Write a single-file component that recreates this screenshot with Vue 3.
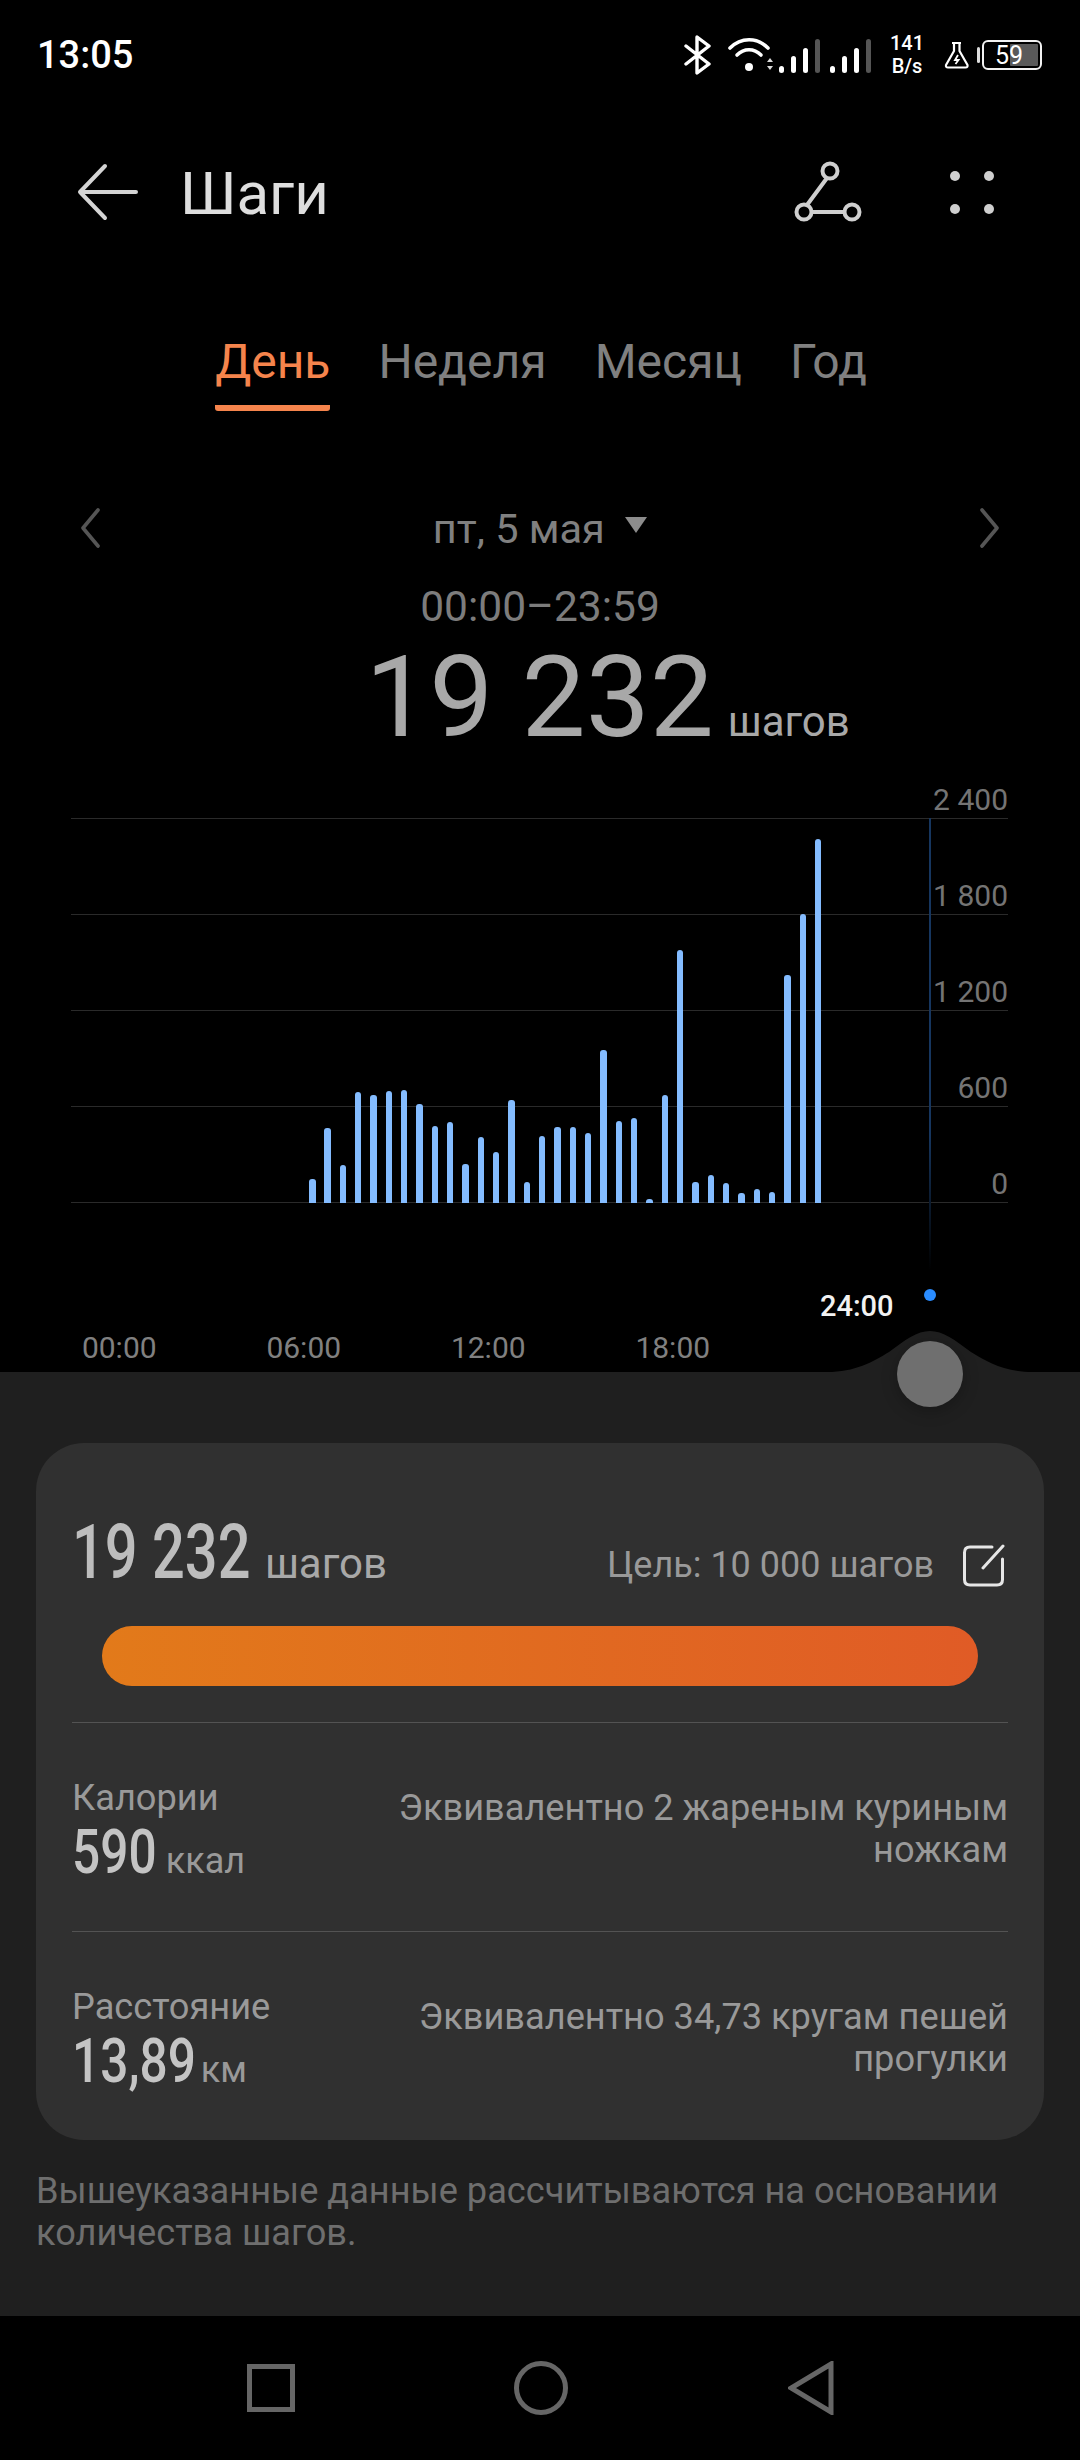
<template>
  <div class="page">
    <section class="top">
      <header class="status">
        <span class="clock">13:05</span>
        <div class="status-icons">
          <svg class="ic-bt" width="30" height="40" viewBox="0 0 30 40">
            <path d="M3 11 L26 29 L14 38 V2 L26 11 L3 29" fill="none" stroke="#fff" stroke-width="3.4" stroke-linejoin="round" stroke-linecap="round" />
          </svg>
          <svg class="ic-wifi" width="46" height="36" viewBox="0 0 46 36">
            <path d="M2 11 C13 0 29 0 40 11" fill="none" stroke="#fff" stroke-width="3.6" stroke-linecap="round" />
            <path d="M9 18 C16 11 26 11 33 18" fill="none" stroke="#fff" stroke-width="3.6" stroke-linecap="round" />
            <circle cx="21" cy="30" r="4" fill="#fff" />
            <path d="M39 25 L42 21 L45 25 Z M39 29 L45 29 L42 33 Z" fill="#ddd" />
          </svg>
          <div v-for="n in 2" :key="n" class="signal">
            <span v-for="(h, i) in signalBars" :key="i" class="sig-bar" :class="{ off: i === 3 }" :style="{ height: h + 'px' }"></span>
          </div>
          <div class="speed"><span>141</span><span>B/s</span></div>
          <svg class="ic-flask" width="26" height="28" viewBox="0 0 26 28">
            <path d="M8 2 H17 M10 2 V10 L2 24 Q1.5 26.5 4 26.5 H21.5 Q24 26.5 23.5 24 L15.5 10 V2" fill="none" stroke="#fff" stroke-width="2.2" stroke-linejoin="round" />
            <path d="M14 14 L11 19 H14.5 L11.5 23" fill="none" stroke="#fff" stroke-width="1.8" />
          </svg>
          <span class="bat-nub"></span>
          <div class="battery">
            <span class="bat-fill"></span>
            <span class="bat-num">59</span>
          </div>
        </div>
      </header>

      <div class="appbar">
        <svg width="64" height="58" viewBox="0 0 64 58" class="back">
          <path d="M29 3 L4 29 L29 55 M4 29 H60" fill="none" stroke="#d4d4d4" stroke-width="4" stroke-linecap="round" stroke-linejoin="round" />
        </svg>
        <h1>Шаги</h1>
        <svg width="68" height="62" viewBox="0 0 68 62" class="share">
          <circle cx="36" cy="10" r="7.5" fill="none" stroke="#cfcfcf" stroke-width="4" />
          <circle cx="10" cy="51" r="7.5" fill="none" stroke="#cfcfcf" stroke-width="4" />
          <circle cx="58" cy="51" r="7.5" fill="none" stroke="#cfcfcf" stroke-width="4" />
          <path d="M33 17 L13 44 M18 51 H50" fill="none" stroke="#cfcfcf" stroke-width="4" />
        </svg>
        <div class="dots"><i></i><i></i><i></i><i></i></div>
      </div>

      <nav class="tabs">
        <span v-for="(t, i) in tabs" :key="t" class="tab" :class="{ active: i === 0 }">{{ t }}</span>
      </nav>

      <div class="date-row">
        <svg width="24" height="40" viewBox="0 0 24 40"><path d="M20 2 L5 20 L20 38" fill="none" stroke="#555" stroke-width="3.6" stroke-linecap="round" stroke-linejoin="round" /></svg>
        <div class="date">пт, 5 мая <span class="caret"></span></div>
        <svg width="24" height="40" viewBox="0 0 24 40"><path d="M4 2 L19 20 L4 38" fill="none" stroke="#555" stroke-width="3.6" stroke-linecap="round" stroke-linejoin="round" /></svg>
      </div>

      <div class="range">00:00–23:59</div>
      <div class="total"><span class="total-num">19 232</span><span class="total-unit">шагов</span></div>

      <div class="chart">
        <div v-for="l in yLabels" :key="l" class="grid-row"><span>{{ l }}</span></div>
        <div class="bars">
          <span v-for="(h, i) in bars" :key="i" class="bar" :style="{ height: h + 'px' }"></span>
        </div>
        <div class="x-labels">
          <span v-for="x in xLabels" :key="x">{{ x }}</span>
        </div>
        <div class="cursor-line"></div>
        <div class="cursor-dot"></div>
        <div class="cursor-time">24:00</div>
      </div>
    </section>

    <section class="panel">
      <svg class="hump" width="206" height="42" viewBox="0 0 206 42">
        <path d="M0 42 V41 C28 41 46 31 62 21 C78 9 90 0 103 0 C116 0 128 9 144 21 C160 31 178 41 206 41 V42 Z" fill="#1f1f1f" />
      </svg>
      <div class="knob"></div>

      <div class="card">
        <div class="goal-row">
          <div class="value-big"><b>19 232</b><span>шагов</span></div>
          <div class="goal">
            <span>Цель: 10 000 шагов</span>
            <svg width="44" height="44" viewBox="0 0 44 44">
              <path d="M31 4 H9 Q3.5 4 3.5 9.5 V36.5 Q3.5 42 9 42 H36 Q41.5 42 41.5 36.5 V16" fill="none" stroke="#e6e6e6" stroke-width="3" stroke-linecap="round" />
              <path d="M42 3 L22 25" fill="none" stroke="#e6e6e6" stroke-width="3" stroke-linecap="round" />
            </svg>
          </div>
        </div>
        <div class="progress"></div>

        <div v-for="row in stats" :key="row.label" class="stat">
          <div class="stat-left">
            <div class="stat-label">{{ row.label }}</div>
            <div class="stat-value"><b>{{ row.value }}</b><span>{{ row.unit }}</span></div>
          </div>
          <p class="stat-note">{{ row.note }}</p>
        </div>
      </div>

      <p class="footnote">Вышеуказанные данные рассчитываются на основании количества шагов.</p>
    </section>

    <footer class="navbar">
      <svg width="48" height="48" viewBox="0 0 48 48"><rect x="2.5" y="2.5" width="43" height="43" fill="none" stroke="#666" stroke-width="5" /></svg>
      <svg width="54" height="54" viewBox="0 0 54 54"><circle cx="27" cy="27" r="24.5" fill="none" stroke="#666" stroke-width="5" /></svg>
      <svg width="46" height="54" viewBox="0 0 46 54"><path d="M43 3 V51 L3 27 Z" fill="none" stroke="#666" stroke-width="5" stroke-linejoin="miter" /></svg>
    </footer>
  </div>
</template>

<script setup>
const tabs = ['День', 'Неделя', 'Месяц', 'Год']
const signalBars = [7, 17, 25, 34]
const yLabels = ['2 400', '1 800', '1 200', '600', '0']
const xLabels = ['00:00', '06:00', '12:00', '18:00']
const bars = [24, 75, 38, 111, 108, 112, 113, 99, 77, 81, 39, 66, 51, 103, 21, 67, 76, 76, 70, 153, 82, 85, 4, 108, 253, 21, 28, 20, 10, 14, 11, 228, 289, 364]
const stats = [
  { label: 'Калории', value: '590', unit: 'ккал', note: 'Эквивалентно 2 жареным куриным ножкам' },
  { label: 'Расстояние', value: '13,89', unit: 'км', note: 'Эквивалентно 34,73 кругам пешей прогулки' },
]
</script>

<style>
body {
  background: #000;
}
</style>

<style scoped>
.page {
  width: 1080px;
  height: 2460px;
  display: flex;
  flex-direction: column;
  background: #000;
  font-family: Roboto, "Noto Sans", sans-serif;
  overflow: hidden;
}
.top {
  height: 1372px;
  flex: none;
}
.status {
  height: 110px;
  display: flex;
  align-items: center;
  justify-content: space-between;
  padding: 0 38px 0 37px;
  box-sizing: border-box;
}
.clock {
  color: #fff;
  font-size: 38px;
  font-weight: 500;
}
.status-icons {
  display: flex;
  align-items: center;
}
.ic-bt { margin-right: 15px; }
.ic-wifi { margin-right: 5px; }
.signal {
  display: flex;
  align-items: flex-end;
  gap: 7px;
  height: 34px;
  margin-right: 10px;
  margin-top: 2px;
}
.sig-bar {
  width: 5px;
  background: #fff;
  border-radius: 3px;
}
.sig-bar.off { background: #555; }
.speed {
  display: flex;
  flex-direction: column;
  align-items: center;
  width: 32px;
  margin: 0 21px 0 10px;
  color: #fff;
  font-size: 20px;
  line-height: 23px;
  font-weight: 500;
}
.ic-flask { margin-right: 7px; }
.bat-nub {
  width: 3px;
  height: 16px;
  background: #ddd;
  border-radius: 2px;
  margin-right: 2px;
}
.battery {
  position: relative;
  width: 60px;
  height: 30px;
  box-sizing: border-box;
  border: 2.5px solid #f2f2f2;
  border-radius: 6px;
  display: flex;
  align-items: center;
  justify-content: center;
}
.bat-fill {
  position: absolute;
  right: 2px;
  top: 2px;
  bottom: 2px;
  width: 28px;
  background: #5a5a5a;
  border-radius: 1px;
}
.bat-num {
  position: relative;
  color: #fff;
  font-size: 25px;
  margin-right: 6px;
}
.appbar {
  height: 164px;
  display: flex;
  align-items: center;
  padding: 0 40px 0 76px;
  box-sizing: border-box;
}
.appbar h1 {
  margin: 2px 0 0 40px;
  flex: 1;
  color: #dedede;
  font-size: 60px;
  font-weight: 400;
}
.share { margin-right: 88px; }
.dots {
  display: grid;
  grid-template-columns: 10px 10px;
  gap: 23px 24px;
  margin-right: 46px;
}
.dots i {
  width: 10px;
  height: 10px;
  border-radius: 50%;
  background: #cfcfcf;
}
.tabs {
  display: flex;
  justify-content: center;
  gap: 48px;
  padding: 58px 0 0 2px;
  height: 150px;
  box-sizing: border-box;
}
.tab {
  color: #808080;
  font-size: 48px;
  line-height: 60px;
  height: 79px;
  box-sizing: border-box;
}
.tab.active {
  color: #f5844c;
  border-bottom: 6px solid #f5844c;
  border-radius: 0 0 3px 3px;
}
.date-row {
  display: flex;
  align-items: center;
  justify-content: space-between;
  height: 60px;
  margin-top: 74px;
  padding: 0 78px;
}
.date {
  color: #808080;
  font-size: 41.5px;
  display: flex;
  align-items: center;
  white-space: pre;
}
.caret {
  width: 0;
  height: 0;
  margin-left: 10px;
  margin-bottom: 6px;
  border-left: 11px solid transparent;
  border-right: 11px solid transparent;
  border-top: 16px solid #8c8c8c;
}
.range {
  margin-top: 24px;
  height: 50px;
  line-height: 50px;
  text-align: center;
  color: #7c7c7c;
  font-size: 42.5px;
}
.total {
  display: flex;
  align-items: baseline;
  justify-content: center;
  height: 120px;
  line-height: 130px;
  color: #a8a8a8;
  padding-left: 135px;
}
.total-num {
  font-size: 114px;
}
.total-unit {
  font-size: 42px;
  margin-left: 14px;
}
.chart {
  position: relative;
  height: 619px;
}
.grid-row {
  height: 96px;
  margin: 0 72px 0 71px;
  border-bottom: 1px solid #2a2a2a;
  box-sizing: border-box;
  display: flex;
  align-items: flex-end;
  justify-content: flex-end;
  color: #747474;
  font-size: 30px;
  line-height: 36px;
}
.grid-row:first-child {
  height: 67px;
}
.bars {
  position: absolute;
  left: 309px;
  top: 0;
  height: 451px;
  display: flex;
  align-items: flex-end;
  gap: 8.84px;
}
.bar {
  width: 6.5px;
  background: #84bcff;
  border-radius: 3px 3px 0 0;
}
.x-labels {
  position: absolute;
  left: 27px;
  top: 578px;
  display: flex;
  color: #808080;
  font-size: 30px;
}
.x-labels span {
  width: 184.5px;
  text-align: center;
}
.cursor-line {
  position: absolute;
  left: 929px;
  top: 66px;
  width: 2px;
  height: 452px;
  background: linear-gradient(#16365f, #16365f 70%, #000);
}
.cursor-dot {
  position: absolute;
  left: 924px;
  top: 537px;
  width: 12px;
  height: 12px;
  border-radius: 50%;
  background: #2a8cff;
}
.cursor-time {
  position: absolute;
  left: 820px;
  top: 537px;
  color: #f2f2f2;
  font-size: 29px;
  font-weight: 500;
}
.panel {
  position: relative;
  flex: 1;
  background: #1f1f1f;
  padding: 71px 36px 0;
}
.hump {
  position: absolute;
  left: 827px;
  top: -41px;
}
.knob {
  position: absolute;
  left: 897px;
  top: -31px;
  width: 66px;
  height: 66px;
  border-radius: 50%;
  background: #6f6f6f;
  box-shadow: 0 4px 16px rgba(0, 0, 0, 0.25);
}
.card {
  height: 697px;
  box-sizing: border-box;
  background: #303030;
  border-radius: 48px;
  padding: 0 36px;
}
.goal-row {
  height: 165px;
  display: flex;
  align-items: flex-end;
  justify-content: space-between;
  padding-bottom: 18px;
  box-sizing: border-box;
}
.value-big {
  display: flex;
  align-items: baseline;
  color: #a8a8a8;
  font-size: 42px;
}
/* reference numerals are a condensed face, Roboto has none installed */
.value-big b {
  display: inline-block;
  font-size: 76px;
  line-height: 76px;
  font-weight: 500;
  color: #bdbdbd;
  transform: scaleX(0.76);
  transform-origin: left;
  margin-right: -42px;
}
.goal {
  display: flex;
  align-items: center;
  gap: 27px;
  color: #999;
  font-size: 36px;
  padding-right: 3px;
  margin-bottom: 3px;
}
.progress {
  height: 60px;
  margin: 18px 30px 36px;
  border-radius: 30px;
  background: linear-gradient(90deg, #e27a1a, #e05b26);
}
.stat {
  height: 209px;
  box-sizing: border-box;
  border-top: 1px solid #535353;
  display: flex;
  justify-content: space-between;
  padding-top: 53px;
}
.stat-label {
  color: #999;
  font-size: 36.2px;
  line-height: 43px;
}
.stat-value {
  display: flex;
  align-items: baseline;
  color: #999;
  font-size: 36px;
}
.stat-value b {
  display: inline-block;
  font-size: 62px;
  line-height: 66px;
  font-weight: 500;
  color: #c4c4c4;
  transform: scaleX(0.8);
  transform-origin: left;
  margin-right: -12px;
}
.stat:last-child .stat-value b {
  margin-right: -26px;
}
.stat-note {
  margin: 11px 0 0;
  width: 680px;
  text-align: right;
  color: #999;
  font-size: 36.2px;
  line-height: 42px;
}
.footnote {
  margin: 30px 0 0;
  color: #6e6e6e;
  font-size: 36.2px;
  line-height: 42px;
}
.navbar {
  height: 144px;
  flex: none;
  display: flex;
  align-items: center;
  justify-content: center;
  gap: 219.5px;
  background: #000;
}
</style>
